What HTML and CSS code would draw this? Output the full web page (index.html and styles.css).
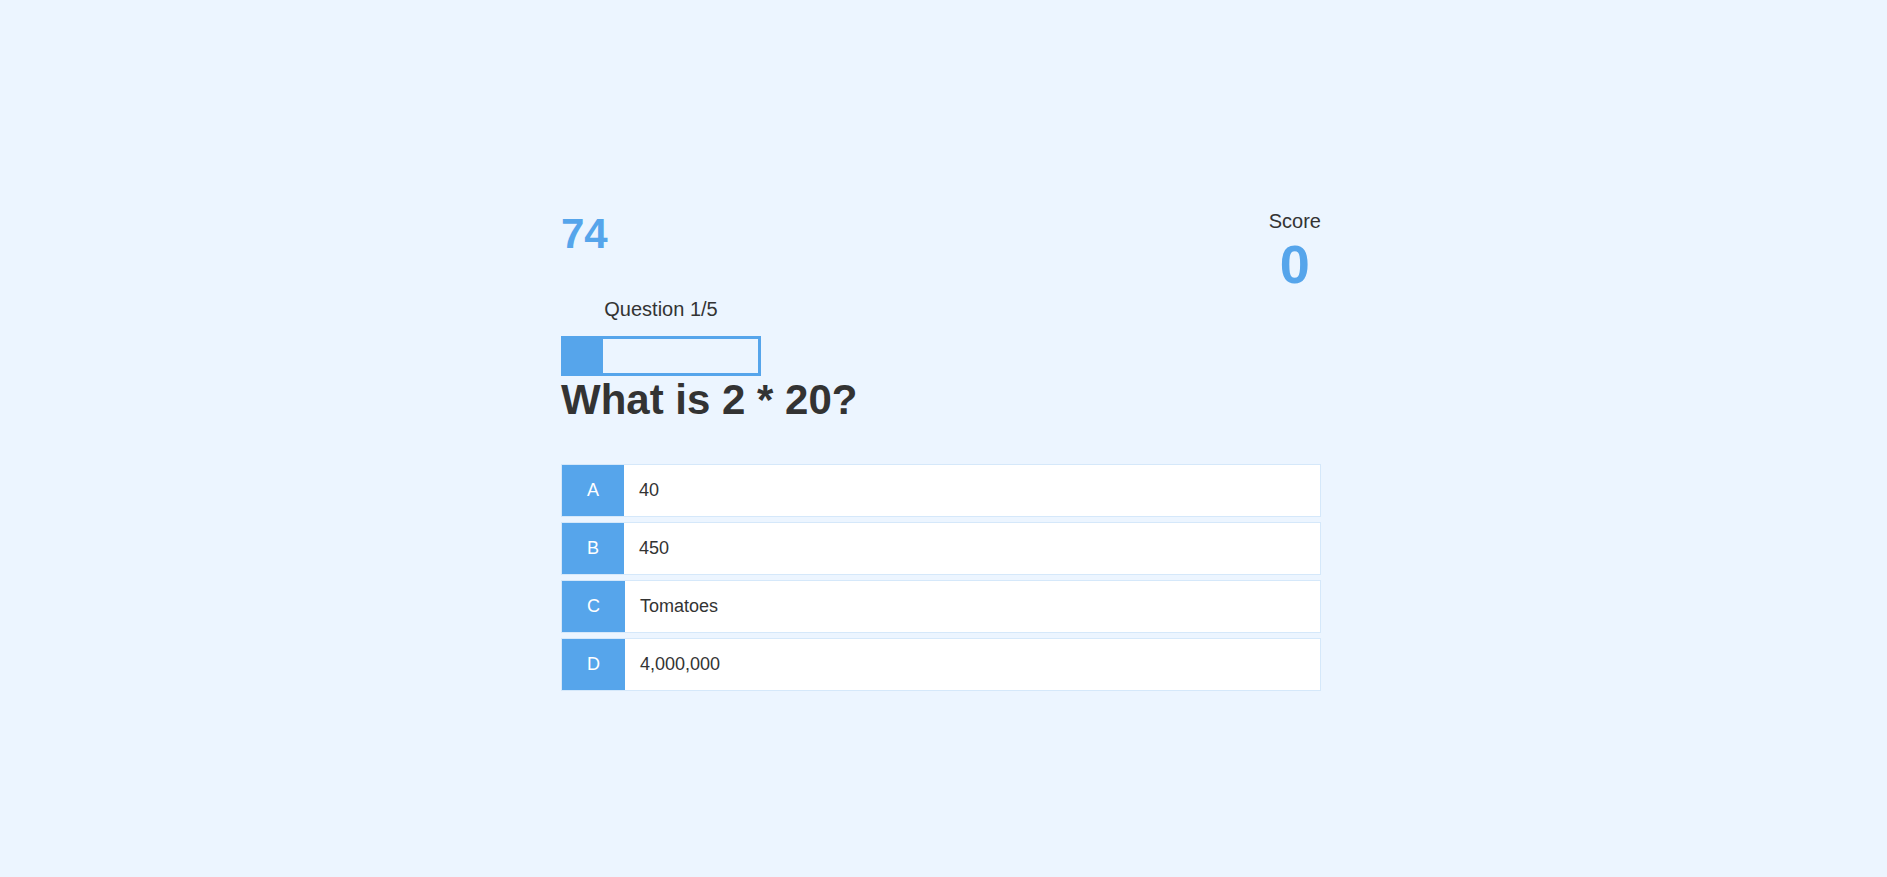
FILE: index.html
```html
<!DOCTYPE html>
<html lang="en">
<head>
<meta charset="UTF-8">
<title>Quiz</title>
<link rel="stylesheet" href="styles.css">
</head>
<body>
<div class="container">
  <div class="game">
    <div class="hud">
      <div class="hud-item hud-left">
        <h2 class="timer">74</h2>
        <p class="hud-prefix progress-text">Question 1/5</p>
        <div class="progress-bar"><div class="progress-bar-full" style="width: 20%"></div></div>
      </div>
      <div class="hud-item">
        <p class="hud-prefix">Score</p>
        <h1 class="hud-main-text">0</h1>
      </div>
    </div>
    <h2 class="question">What is 2 * 20?</h2>
    <div class="choice-container"><p class="choice-prefix">A</p><p class="choice-text">40</p></div>
    <div class="choice-container"><p class="choice-prefix">B</p><p class="choice-text">450</p></div>
    <div class="choice-container"><p class="choice-prefix">C</p><p class="choice-text">Tomatoes</p></div>
    <div class="choice-container"><p class="choice-prefix">D</p><p class="choice-text">4,000,000</p></div>
  </div>
</div>
</body>
</html>
```

FILE: styles.css
```css
* {
  box-sizing: border-box;
  margin: 0;
  padding: 0;
  font-family: Arial, "Liberation Sans", Helvetica, sans-serif;
  color: #333;
}

html {
  background-color: #ecf5ff;
}

body {
  margin: 0;
  padding: 0 5px 0 0;
  background-color: #ecf5ff;
}

.container {
  max-width: 800px;
  margin: 0 auto;
  padding: 210px 20px 20px;
}

.game {
  display: flex;
  flex-direction: column;
}

.hud {
  display: flex;
  justify-content: space-between;
  align-items: flex-start;
}

.hud-item {
  display: flex;
  flex-direction: column;
}

.hud-left {
  align-items: flex-start;
}

.timer {
  font-size: 42px;
  font-weight: 700;
  color: #56a5eb;
  margin-bottom: 40px;
}

.hud-prefix {
  text-align: center;
  font-size: 20px;
}

.progress-text {
  width: 200px;
}

.hud-main-text {
  text-align: center;
  font-size: 54px;
  font-weight: 700;
  color: #56a5eb;
}

.progress-bar {
  width: 200px;
  height: 40px;
  border: 3px solid #56a5eb;
  margin-top: 15px;
}

.progress-bar-full {
  height: 34px;
  background-color: #56a5eb;
}

.question {
  font-size: 42px;
  font-weight: 700;
  margin-bottom: 40px;
}

.choice-container {
  display: flex;
  width: 100%;
  margin-bottom: 5px;
  font-size: 18px;
  border: 1px solid rgba(86, 165, 235, 0.25);
  background-color: #fff;
}

.choice-prefix {
  padding: 15px 25px;
  background-color: #56a5eb;
  color: #fff;
}

.choice-text {
  padding: 15px;
  width: 100%;
}
```
